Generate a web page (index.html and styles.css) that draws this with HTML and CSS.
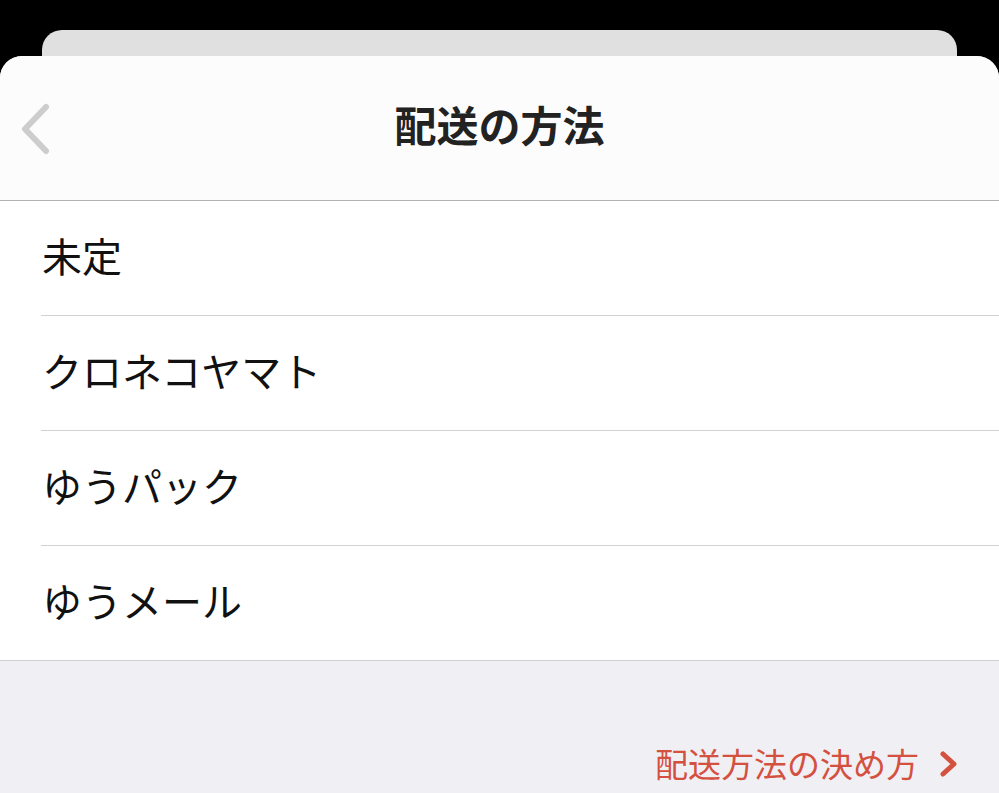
FILE: index.html
```html
<!DOCTYPE html>
<html lang="ja">
<head>
<meta charset="utf-8">
<link rel="stylesheet" href="styles.css">
</head>
<body>
<div class="back-card"></div>
<div class="sheet">
  <header class="nav">
    <button class="back" aria-label="戻る">
      <svg width="34" height="54" viewBox="0 0 34 54"><path d="M26 4 L5 26 L26 48" fill="none" stroke="#cdcdcd" stroke-width="6" stroke-linecap="round" stroke-linejoin="round"/></svg>
    </button>
    <h1 class="title">配送の方法</h1>
  </header>
  <ul class="list">
    <li class="item">未定</li>
    <li class="item">クロネコヤマト</li>
    <li class="item">ゆうパック</li>
    <li class="item">ゆうメール</li>
  </ul>
  <footer class="foot">
    <a class="help" href="#">配送方法の決め方
      <svg width="20" height="26" viewBox="0 0 20 26"><path d="M4 3 L15 13 L4 23" fill="none" stroke="#d4503f" stroke-width="5" stroke-linecap="round" stroke-linejoin="round"/></svg>
    </a>
  </footer>
</div>
</body>
</html>
```

FILE: styles.css
```css
html, body {
  margin: 0;
  padding: 0;
  background: #000;
  height: 100%;
  overflow: hidden;
}
body {
  font-family: "Noto Sans CJK JP", "Noto Sans", sans-serif;
}
.back-card {
  margin: 30px 42px 0;
  height: 26px;
  background: #e0e0e0;
  border-radius: 20px 20px 0 0;
}
.sheet {
  background: #f0eff4;
  border-radius: 22px 22px 0 0;
  overflow: hidden;
  height: 737px;
}
.nav {
  position: relative;
  height: 144px;
  background: #fcfcfc;
  border-bottom: 1px solid #b2b2b2;
  display: flex;
  align-items: center;
  justify-content: center;
}
.back {
  position: absolute;
  left: 20px;
  top: 47px;
  padding: 0;
  border: 0;
  background: none;
  display: flex;
}
.title {
  margin: 0 0 9px;
  font-size: 42px;
  font-weight: 700;
  color: #222;
  line-height: 1;
}
.list {
  list-style: none;
  margin: 0;
  padding: 0 0 0 41px;
  background: #fff;
  border-bottom: 1px solid #cfcfcf;
}
.item {
  height: 115px;
  box-sizing: border-box;
  padding: 0 0 6px 1px;
  display: flex;
  align-items: center;
  font-size: 40px;
  color: #111;
  border-bottom: 1px solid #d2d2d2;
}
.item:last-child {
  height: 114px;
  border-bottom: 0;
}
.foot {
  display: flex;
  justify-content: flex-end;
  padding: 86px 40px 0 0;
}
.help {
  display: flex;
  align-items: center;
  gap: 20px;
  font-size: 33px;
  color: #d4503f;
  text-decoration: none;
  line-height: 1;
}
```
